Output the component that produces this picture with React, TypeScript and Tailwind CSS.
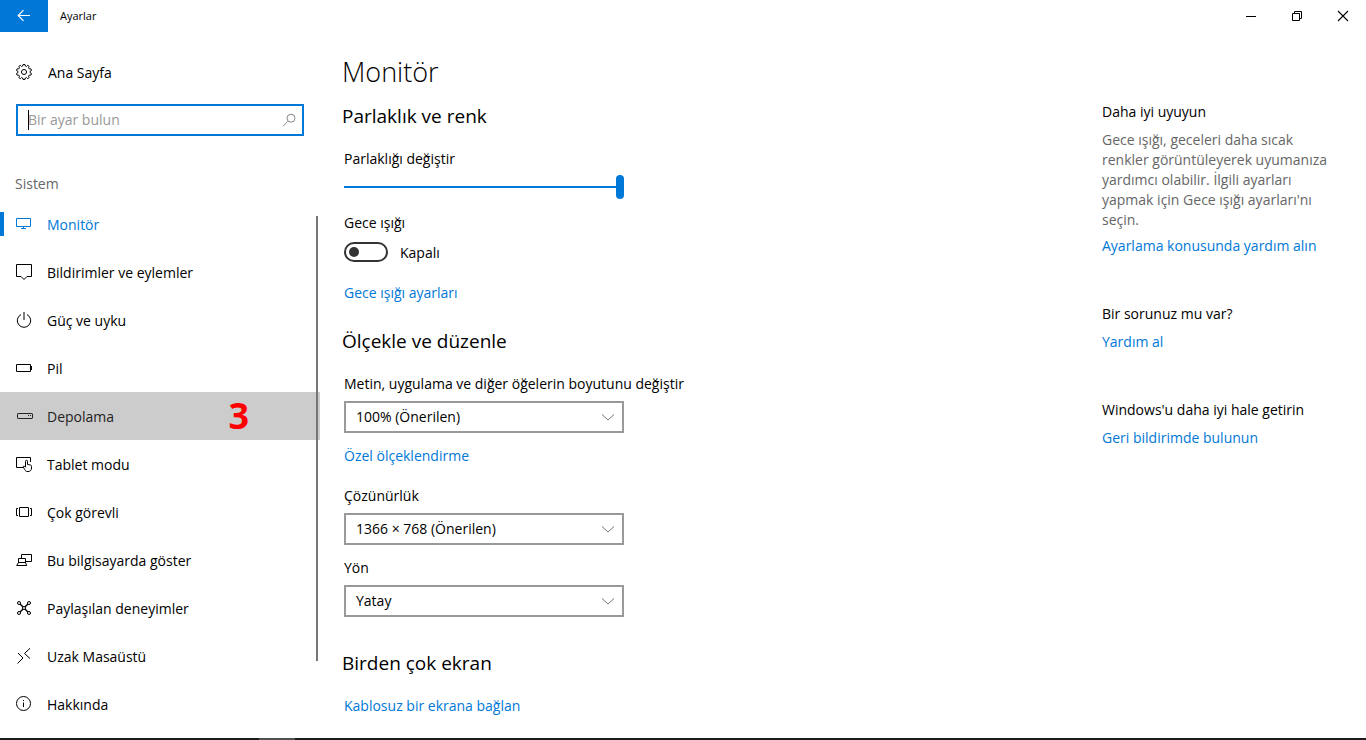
import { useState } from "react";
import type { ReactNode } from "react";

function Icon({ children }: { children: ReactNode }) {
  return (
    <svg
      className="size-4 shrink-0 overflow-visible"
      viewBox="0 0 16 16"
      fill="none"
      stroke="currentColor"
      strokeWidth="1"
      aria-hidden="true"
    >
      {children}
    </svg>
  );
}

const TEETH = 10;
const corners = [
  { radius: 7.6, share: -0.2 },
  { radius: 7.6, share: 0.2 },
  { radius: 6.2, share: 0.3 },
  { radius: 6.2, share: 0.7 },
];
const gearPath =
  Array.from({ length: TEETH * 4 }, (_, i) => {
    const { radius, share } = corners[i % 4];
    const angle = ((Math.floor(i / 4) + share) / TEETH) * 2 * Math.PI - Math.PI / 2;
    return `${i ? "L" : "M"}${(8 + radius * Math.cos(angle)).toFixed(2)} ${(8 + radius * Math.sin(angle)).toFixed(2)}`;
  }).join("") + "Z";

const items: { label: string; icon: ReactNode; badge?: string }[] = [
  {
    label: "Monitör",
    icon: <path d="M.5 2.5h14v8H.5zM7.5 10.5v2M5 12.5h5" />,
  },
  {
    label: "Bildirimler ve eylemler",
    icon: <path d="M.5.5h15v12h-4.5l-3 3-3-3H.5z" />,
  },
  {
    label: "Güç ve uyku",
    icon: (
      <>
        <path d="M5 2.6a6.7 6.7 0 1 0 6 0" />
        <path d="M8 0v8" />
      </>
    ),
  },
  {
    label: "Pil",
    icon: <path d="M.5 4.5h14v7H.5zM15.5 6v4" />,
  },
  {
    label: "Depolama",
    badge: "3",
    icon: (
      <>
        <rect x="1.5" y="5.5" width="15" height="5" rx=".6" />
        <path d="M12 7.5h1M14 7.5h1" />
      </>
    ),
  },
  {
    label: "Tablet modu",
    icon: (
      <>
        <path d="M7 11.5H.5v-10h14V6" />
        <path d="M9.5 11V5.300a1 1 0 0 1 2 0V8.500l3 .5c.7.200 1 .6 1 1.300V12c0 2.200-1.500 3.600-3.500 3.600-1.800 0-2.700-.8-3.400-2.200L7.300 11c-.2-.9.600-1.200 1.200-.7l1 1" />
      </>
    ),
  },
  {
    label: "Çok görevli",
    icon: <path d="M3.5 3.5h9v9h-9zM2 4.5H.5v7H2M14 4.5h1.5v7H14" />,
  },
  {
    label: "Bu bilgisayarda göster",
    icon: (
      <>
        <path d="M5.5 6V2.5h10v7H10" />
        <path d="M2.5 11V6.5h7V11M2.5 10.5h7l1.2 3H.7z" />
      </>
    ),
  },
  {
    label: "Paylaşılan deneyimler",
    icon: (
      <>
        <circle cx="3" cy="3" r="1.5" />
        <circle cx="13" cy="3" r="1.5" />
        <circle cx="3" cy="13" r="1.5" />
        <circle cx="13" cy="13" r="1.5" />
        <circle cx="8" cy="8" r="1.5" />
        <path d="M4.1 4.1 7 7M11.9 4.1 9 7M4.1 11.9 7 9M11.9 11.9 9 9" strokeWidth="1.4" />
      </>
    ),
  },
  {
    label: "Uzak Masaüstü",
    icon: <path d="m2 5 5 5-5.5 5.5M14 .3 8.5 5.5l5.500 5" />,
  },
  {
    label: "Hakkında",
    icon: (
      <>
        <circle cx="7.5" cy="7.5" r="7" />
        <path d="M7.5 6.5V11M7.5 4v1" />
      </>
    ),
  },
];

function TitleBar() {
  return (
    <header className="flex h-8 items-center">
      <button aria-label="Geri" className="flex h-8 w-12 items-center justify-center bg-[#0078d7] text-white">
        <Icon>
          <path d="M14 7.5H2.5M7.5 2.2 2.2 7.5l5.3 5.3" strokeWidth="1.2" />
        </Icon>
      </button>
      <span className="ml-3 flex-1 text-[11px]">Ayarlar</span>
      <button aria-label="Simge durumuna küçült" className="flex h-8 w-[46px] items-center justify-center">
        <Icon>
          <path d="M3 8.5h10" />
        </Icon>
      </button>
      <button aria-label="Önceki boyut" className="flex h-8 w-[46px] items-center justify-center">
        <Icon>
          <path d="M3.5 5.5h7v7h-7zM5.5 5.5v-2h7v7h-2" />
        </Icon>
      </button>
      <button aria-label="Kapat" className="flex h-8 w-[46px] items-center justify-center">
        <Icon>
          <path d="m3 3 10 10M13 3 3 13" strokeWidth="1.1" />
        </Icon>
      </button>
    </header>
  );
}

function Sidebar() {
  return (
    <div className="w-80 shrink-0 pt-5">
      <a href="#home" className="flex h-10 items-center gap-4 px-4">
        <Icon>
          <path d={gearPath} />
          <circle cx="8" cy="8" r="2.5" />
        </Icon>
        <span className="pt-0.5">Ana Sayfa</span>
      </a>
      <div className="relative mx-4 mt-3 flex h-8 items-center border-2 border-[#0078d7] pr-1.5 pl-2.5">
        <span className="absolute left-2.5 h-5 w-px bg-black" />
        <input
          type="text"
          aria-label="Bir ayar bulun"
          placeholder="Bir ayar bulun"
          className="min-w-0 flex-1 outline-none placeholder:text-[#999]"
        />
        <span className="text-[#888]">
          <Icon>
            <circle cx="11" cy="6.2" r="4" />
            <path d="m8 9.200-5 5" />
          </Icon>
        </span>
      </div>
      <h2 className="mt-[38px] px-[15px] text-[#666]">Sistem</h2>
      <nav className="relative mt-1.5">
        {items.map((item, i) => (
          <a
            key={item.label}
            href={`#${i}`}
            className={
              "relative flex h-12 items-center gap-[15px] px-4 " +
              (i === 0 ? "text-[#0078d7]" : i === 4 ? "bg-[#ccc] text-[#222]" : "")
            }
          >
            {i === 0 && <span className="absolute left-0 h-6 w-1 bg-[#0078d7]" />}
            <Icon>{item.icon}</Icon>
            <span className="flex-1 pt-0.5">{item.label}</span>
            {item.badge && (
              <span className="mr-[55px] text-4xl leading-none font-bold text-[#f00]">{item.badge}</span>
            )}
          </a>
        ))}
        <span className="absolute top-4 right-0.5 h-[445px] w-0.5 bg-[#767676]" />
      </nav>
    </div>
  );
}

function SelectField({ id, label, value }: { id: string; label: string; value: string }) {
  return (
    <div>
      <label htmlFor={id} className="block">
        {label}
      </label>
      <div className="relative mt-[7px] flex w-[280px] items-center">
        <select
          id={id}
          className="h-8 w-full appearance-none border-2 border-[#999] bg-white pl-2.5 outline-none"
        >
          <option>{value}</option>
        </select>
        <span className="pointer-events-none absolute right-2 text-[#777]">
          <Icon>
            <path d="m2 5.5 6 5.5 6-5.5" />
          </Icon>
        </span>
      </div>
    </div>
  );
}

function Display() {
  const [brightness, setBrightness] = useState(100);
  const [night, setNight] = useState(false);
  return (
    <main className="min-w-0 flex-1 pt-5 pl-6">
      <h1 className="-ml-0.5 text-[27px] leading-10 font-light">Monitör</h1>
      <h2 className="-ml-0.5 mt-2.5 text-[19px] leading-7">Parlaklık ve renk</h2>
      <label htmlFor="brightness" className="mt-[19px] block">
        Parlaklığı değiştir
      </label>
      <input
        id="brightness"
        type="range"
        min={0}
        max={100}
        value={brightness}
        onChange={(e) => setBrightness(Number(e.target.value))}
        className="mt-1.5 block h-6 w-[280px] appearance-none bg-transparent [&::-webkit-slider-runnable-track]:h-0.5 [&::-webkit-slider-runnable-track]:bg-[#0078d7] [&::-webkit-slider-thumb]:mt-[-11px] [&::-webkit-slider-thumb]:h-6 [&::-webkit-slider-thumb]:w-2 [&::-webkit-slider-thumb]:appearance-none [&::-webkit-slider-thumb]:rounded-full [&::-webkit-slider-thumb]:bg-[#0078d7]"
      />
      <p id="night" className="mt-3.5">
        Gece ışığı
      </p>
      <div className="mt-[9px] flex h-5 items-center gap-3">
        <button
          role="switch"
          aria-checked={night}
          aria-labelledby="night"
          onClick={() => setNight(!night)}
          className={
            "flex h-5 w-11 items-center rounded-full border-2 border-[#333] px-[3px] " +
            (night ? "justify-end" : "justify-start")
          }
        >
          <span className="size-2.5 rounded-full bg-[#333]" />
        </button>
        <span className="pt-0.5">{night ? "Açık" : "Kapalı"}</span>
      </div>
      <a href="#night" className="mt-[21px] block w-fit text-[#0078d7]">
        Gece ışığı ayarları
      </a>

      <h2 className="mt-6 mb-[19px] -ml-0.5 text-[19px] leading-7">Ölçekle ve düzenle</h2>
      <SelectField id="scale" label="Metin, uygulama ve diğer öğelerin boyutunu değiştir" value="100% (Önerilen)" />
      <a href="#scaling" className="mt-[13px] mb-5 block w-fit text-[#0078d7]">
        Özel ölçeklendirme
      </a>
      <div className="flex flex-col gap-[13px]">
        <SelectField id="resolution" label="Çözünürlük" value="1366 × 768 (Önerilen)" />
        <SelectField id="orientation" label="Yön" value="Yatay" />
      </div>

      <h2 className="mt-8 -ml-0.5 text-[19px] leading-7">Birden çok ekran</h2>
      <a href="#wireless" className="mt-[19px] block w-fit text-[#0078d7]">
        Kablosuz bir ekrana bağlan
      </a>
    </main>
  );
}

function HelpSection({ title, text, link }: { title: string; text?: string; link: string }) {
  return (
    <section>
      <h3>{title}</h3>
      {text && <p className="mt-2 text-[#666]">{text}</p>}
      <a href="#help" className={"block w-fit text-[#0078d7] " + (text ? "mt-1.5" : "mt-2")}>
        {link}
      </a>
    </section>
  );
}

export default function App() {
  return (
    <div className="flex min-h-screen flex-col bg-white font-['Open_Sans','Noto_Sans',sans-serif] text-[14px] leading-5 text-black">
      <TitleBar />
      <div className="flex flex-1">
        <Sidebar />
        <Display />
        <aside className="flex w-[264px] shrink-0 flex-col gap-12 pt-[70px] pr-8">
          <HelpSection
            title="Daha iyi uyuyun"
            text="Gece ışığı, geceleri daha sıcak renkler görüntüleyerek uyumanıza yardımcı olabilir. İlgili ayarları yapmak için Gece ışığı ayarları'nı seçin."
            link="Ayarlama konusunda yardım alın"
          />
          <HelpSection title="Bir sorunuz mu var?" link="Yardım al" />
          <HelpSection title="Windows'u daha iyi hale getirin" link="Geri bildirimde bulunun" />
        </aside>
      </div>
      <footer className="h-0.5 bg-[#1c1b1e] pl-[259px]">
        <div className="h-0.5 w-9 bg-[#505052]" />
      </footer>
    </div>
  );
}
